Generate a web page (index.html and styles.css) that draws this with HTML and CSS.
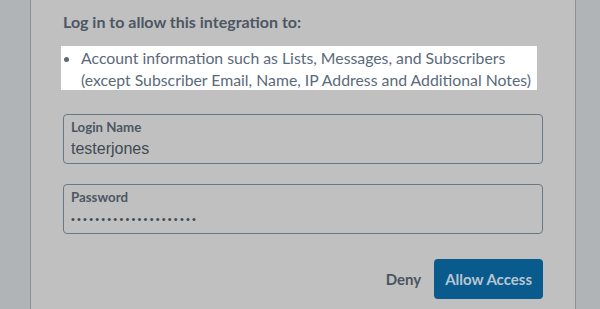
FILE: index.html
```html
<!DOCTYPE html>
<html lang="en">
<head>
    <meta charset="UTF-8">
    <title>Authorize integration</title>
    <link rel="stylesheet" href="styles.css">
</head>
<body>
    <div class="panel">
        <h2>Log in to allow this integration to:</h2>
        <ul class="scopes">
            <li>Account information such as Lists, Messages, and Subscribers<br>(except Subscriber Email, Name, IP Address and Additional Notes)</li>
        </ul>
        <form class="login">
            <label class="field">
                <span class="field-label">Login Name</span>
                <input type="text" value="testerjones">
            </label>
            <label class="field">
                <span class="field-label">Password</span>
                <input type="password" value="passwordpassword12345">
            </label>
            <div class="actions">
                <button type="button" class="deny">Deny</button>
                <button type="button" class="allow">Allow Access</button>
            </div>
        </form>
    </div>
</body>
</html>
```

FILE: styles.css
```css
html, body {
    height: 100%;
}
body {
    margin: 0;
    background-color: #b0b4b6;
    font-family: 'Lato', 'Open Sans', sans-serif;
    color: #4a5560;
}
.panel {
    box-sizing: border-box;
    margin-left: 30px;
    width: 546px;
    min-height: 100%;
    padding: 12px 32px 0 32px;
    background-color: #c0c0c0;
    border-left: 1px solid #8a9297;
    border-right: 1px solid #8a9297;
}
h2 {
    margin: 0;
    font-size: 16px;
    line-height: 20px;
    font-weight: 700;
    color: #4c5763;
}
.scopes {
    display: inline-block;
    margin: 14px 0 0 -2px;
    padding: 1px 6px 0 20px;
    height: 44px;
    box-sizing: border-box;
    background-color: #ffffff;
    font-size: 15.8px;
    line-height: 22px;
    color: #5a6a7a;
}
.login {
    margin-top: 24px;
}
.field {
    display: block;
    box-sizing: border-box;
    height: 50px;
    margin-bottom: 20px;
    padding: 4px 7px 0;
    border: 1px solid #6b7882;
    border-radius: 4px;
}
.field-label {
    display: block;
    font-size: 13.3px;
    line-height: 17px;
    font-weight: 700;
    color: #4c5763;
}
.field input {
    display: block;
    width: 100%;
    margin: 2px 0 0;
    padding: 0;
    border: none;
    background: transparent;
    font-family: 'Liberation Sans', Arial, sans-serif;
    font-size: 16px;
    line-height: 22px;
    color: #404a55;
    outline: none;
}
.field input[type=password] {
    font-size: 11px;
    letter-spacing: 2.2px;
}
.actions {
    display: flex;
    justify-content: flex-end;
    align-items: center;
    gap: 13px;
    margin-top: 25px;
}
button {
    font-family: 'Lato', 'Open Sans', sans-serif;
    font-size: 15px;
    font-weight: 700;
    border: none;
    cursor: pointer;
}
.deny {
    padding: 0;
    background: none;
    color: #4a5560;
}
.allow {
    height: 40px;
    padding: 0 11px;
    background-color: #0a5b8d;
    color: #b9c6d0;
    border-radius: 4px;
}
```
